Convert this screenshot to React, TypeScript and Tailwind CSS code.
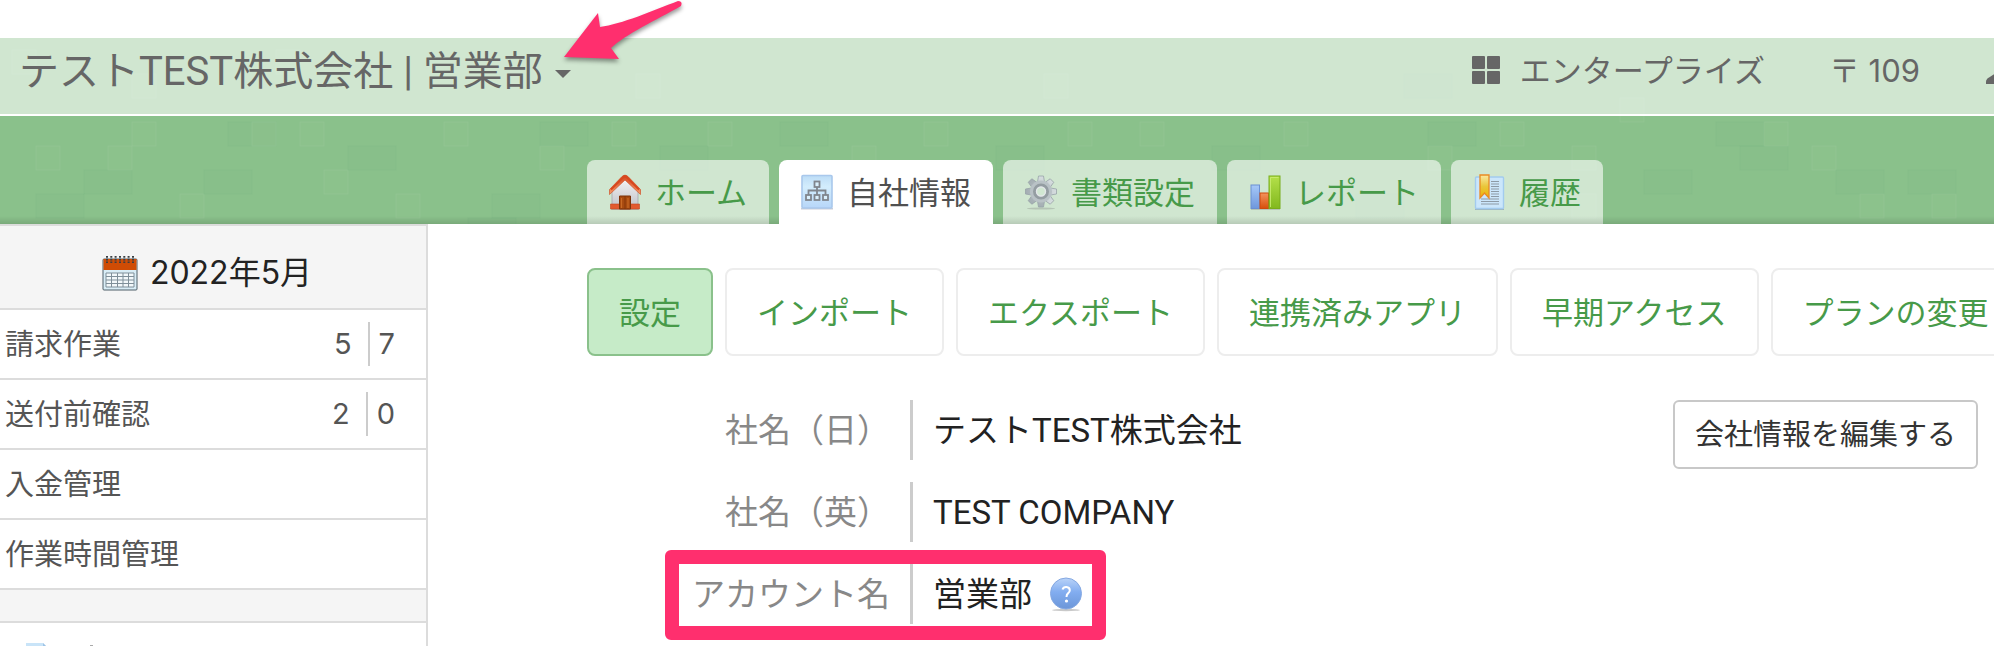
import { useState } from 'react'
import type { ReactNode } from 'react'

// faint tiles scattered over the green header, [column, row, tone]
const TILES: [number, number, number][] = [
  [3, 4, 1], [5, 5, 0], [3, 6, 0], [6, 4, 1], [7, 3, 1], [9, 6, 1], [10, 5, 0], [11, 3, 0], [12, 3, 1], [14, 3, 1], [15, 5, 1], [16, 4, 0],
  [18, 6, 1], [20, 3, 1], [21, 7, 0], [22, 6, 0], [24, 3, 0], [24, 4, 1], [27, 3, 1], [29, 4, 0], [31, 3, 1], [34, 3, 0],
  [37, 4, 1], [40, 3, 1], [43, 4, 0], [46, 3, 1], [49, 3, 1], [52, 4, 0], [55, 3, 1], [58, 6, 0], [61, 3, 0], [61, 4, 1], [64, 3, 1],
  [67, 4, 1], [67, 6, 1], [70, 5, 0], [73, 3, 0], [74, 4, 0], [75, 3, 1], [77, 4, 1], [78, 5, 0], [79, 6, 1], [81, 5, 0], [82, 6, 1],
  [2, 0, 1], [7, 1, 1], [13, 0, 1], [28, 1, 1], [45, 1, 1], [60, 1, 0], [69, 2, 1],
]

function Texture() {
  return (
    <svg className="absolute inset-0 h-full w-full" aria-hidden="true">
      {TILES.map(([col, row, tone]) => (
        <rect
          key={`${col}-${row}`}
          x={col * 24 - 36}
          y={row * 24 + 12}
          width={tone ? 24 : 48}
          height="24"
          fill={tone ? '#a4d09a' : '#76b485'}
          fillOpacity={tone ? 0.1 : 0.09}
          stroke={tone ? '#b4d8ac' : '#6fae7c'}
          strokeOpacity="0.16"
        />
      ))}
    </svg>
  )
}

function HomeIcon() {
  return (
    <svg className="h-9 w-8" viewBox="0 0 32 36" aria-hidden="true">
      <defs>
        <linearGradient id="wall" x1="0" y1="0" x2="0" y2="1">
          <stop offset="0" stopColor="#f4f4f6" />
          <stop offset="1" stopColor="#bfc0c6" />
        </linearGradient>
        <linearGradient id="roof" x1="0" y1="0" x2="0" y2="1">
          <stop offset="0" stopColor="#d2451f" />
          <stop offset="1" stopColor="#f79a68" />
        </linearGradient>
      </defs>
      <path d="M2 35h28v1H2z" fill="#999" opacity=".5" />
      <path d="M3 16 16 4l13 12v19H3z" fill="url(#wall)" stroke="#a5a5ab" strokeWidth=".8" />
      <path d="M1.500 30h29v5h-29z" fill="#e2592f" stroke="#c8441f" strokeWidth=".6" />
      <path d="M10.500 22h11v13h-11z" fill="#a84a10" stroke="#7d3208" />
      <path d="M16 22v13" stroke="#7d3208" strokeWidth=".8" />
      <path d="M12.500 24v10M19 24v10" stroke="#c96a25" strokeWidth="1.200" />
      <path d="M.5 15.500 13 2.500Q16-.4 19 2.500L31.500 15.500v5L16 6 .5 20.500z" fill="url(#roof)" stroke="#d0512a" strokeWidth=".7" />
      <path d="M2 15.500 14 3.500q2-1.800 4 0l12 12" fill="none" stroke="#d8481f" strokeWidth="2" />
    </svg>
  )
}

function OrgIcon() {
  return (
    <svg className="h-9 w-8" viewBox="0 0 32 36" aria-hidden="true">
      <defs>
        <linearGradient id="orgBg" x1="0" y1="0" x2="0" y2="1">
          <stop offset="0" stopColor="#bcdcf6" />
          <stop offset=".35" stopColor="#d3edfd" />
          <stop offset="1" stopColor="#b7d6f8" />
        </linearGradient>
      </defs>
      <path d="M0 34h32v1.500H0z" fill="#b5b8c4" opacity=".7" />
      <rect x="1" y="1.500" width="30" height="32.500" rx="1" fill="url(#orgBg)" stroke="#a9c8ec" strokeWidth="1.600" />
      <g fill="#d9effc" stroke="#80858d" strokeWidth="1.800">
        <path d="M16 12v9M7.500 21v-4.500h17V21" fill="none" />
        <rect x="13.500" y="7.500" width="5" height="5.500" />
        <rect x="5" y="21" width="5" height="5" />
        <rect x="13.500" y="21" width="5" height="5" />
        <rect x="22" y="21" width="5" height="5" />
      </g>
    </svg>
  )
}

function GearIcon() {
  return (
    <svg className="h-9 w-8" viewBox="0 0 32 36" aria-hidden="true">
      <defs>
        <linearGradient id="gear" x1="0" y1="0" x2="0" y2="1">
          <stop offset="0" stopColor="#d6dddf" />
          <stop offset="1" stopColor="#a3adb2" />
        </linearGradient>
      </defs>
      <ellipse cx="16" cy="34.500" rx="14" ry="1" fill="#777" opacity=".3" />
      <g fill="url(#gear)" stroke="#98a3a8" strokeWidth=".8">
        {[0, 45, 90, 135].map((angle) => (
          <path key={angle} d="M13.500 2h5l1 6v19l-1 6h-5l-1-6V8z" transform={`rotate(${angle} 16 17.500)`} />
        ))}
      </g>
      <circle cx="16" cy="17.500" r="11" fill="#b9c2c6" />
      <circle cx="16" cy="17.500" r="6.500" fill="none" stroke="#949da2" strokeWidth="3" />
      <circle cx="16" cy="17.500" r="4.500" fill="#d1e7d2" stroke="#e2e7e8" strokeWidth="1.400" />
    </svg>
  )
}

function ChartIcon() {
  return (
    <svg className="h-9 w-8" viewBox="0 0 32 36" aria-hidden="true">
      <defs>
        <linearGradient id="barBlue" x1="0" y1="0" x2="0" y2="1">
          <stop offset="0" stopColor="#a6c8f8" />
          <stop offset="1" stopColor="#6f97dc" />
        </linearGradient>
        <linearGradient id="barRed" x1="0" y1="0" x2="0" y2="1">
          <stop offset="0" stopColor="#f4935c" />
          <stop offset="1" stopColor="#d64f0c" />
        </linearGradient>
        <linearGradient id="barGreen" x1="0" y1="0" x2="0" y2="1">
          <stop offset="0" stopColor="#b4e04a" />
          <stop offset="1" stopColor="#82b81e" />
        </linearGradient>
      </defs>
      <path d="M2 35h29v1H2z" fill="#777" opacity=".3" />
      <rect x="2" y="11" width="8.500" height="23.500" fill="url(#barBlue)" stroke="#6a90d2" />
      <rect x="11" y="19" width="8.500" height="15.500" fill="url(#barRed)" stroke="#cf4a0c" />
      <rect x="20" y="2" width="11" height="32.500" fill="url(#barGreen)" stroke="#79ad1b" />
      <path d="M21.500 33V3.500h8" fill="none" stroke="#cbee76" strokeWidth=".8" />
    </svg>
  )
}

function HistoryIcon() {
  return (
    <svg className="h-9 w-8" viewBox="0 0 32 36" aria-hidden="true">
      <defs>
        <linearGradient id="ribbon" x1="0" y1="0" x2="0" y2="1">
          <stop offset="0" stopColor="#fbe9a0" />
          <stop offset=".5" stopColor="#e9c63a" />
          <stop offset="1" stopColor="#eeb400" />
        </linearGradient>
      </defs>
      <path d="M2 34.500h29V36H2z" fill="#7d93ad" opacity=".6" />
      <rect x="2.500" y="3" width="28" height="31.500" rx="1" fill="#cbe6fb" stroke="#a3cbee" strokeWidth="1.400" />
      <path d="M18 7.500h8M18 10h8M18 12.500h8M18 15h8M18 17.500h8M18 20h8M18 22.500h8M8 25h18M8 27.500h18M8 30h18" stroke="#8d9aa6" strokeWidth="1.200" />
      <path d="M7 1h9v23l-4.500-5L7 24z" fill="url(#ribbon)" stroke="#ea8a22" strokeWidth="1.300" />
    </svg>
  )
}

function CalendarIcon() {
  return (
    <svg className="h-9 w-9" viewBox="0 0 36 36" aria-hidden="true">
      <rect x="1" y="4" width="34" height="31" rx="1" fill="#d9edf6" stroke="#4f5f68" />
      <path d="M1.500 4h33v11h-33z" fill="#d04c05" />
      <path d="M4 18h28v14H4z" fill="#f2f8fa" stroke="#7f8f99" />
      <path d="M4 21.500h28M4 25h28M4 28.500h28M9.500 18v14M15.500 18v14M21 18v14M26.500 18v14" stroke="#7f8f99" />
      <path d="M5 1v7M9.300 1v7M13.600 1v7M18 1v7M22.300 1v7M26.600 1v7M31 1v7" stroke="#3b3f42" strokeWidth="2" strokeDasharray="1.800 .9" />
    </svg>
  )
}

function HelpIcon() {
  return (
    <svg className="h-9 w-8" viewBox="0 0 32 36" aria-hidden="true">
      <defs>
        <linearGradient id="help" x1="0" y1="0" x2="0" y2="1">
          <stop offset="0" stopColor="#b9d3f8" />
          <stop offset=".45" stopColor="#82adf0" />
          <stop offset="1" stopColor="#6c96d8" />
        </linearGradient>
      </defs>
      <ellipse cx="16" cy="34" rx="14" ry="1.200" fill="#777" opacity=".4" />
      <circle cx="16" cy="17.500" r="15.500" fill="url(#help)" stroke="#86a9e2" />
      <path d="M12.500 13.500q1-2.800 4-2.500 3.300.3 3.300 3.200 0 1.800-1.800 3.200-1.500 1.200-1.500 3.600" fill="none" stroke="#fff" strokeWidth="2" />
      <circle cx="16.500" cy="25" r="1.600" fill="#fff" />
    </svg>
  )
}

const TABS: { label: string; icon: ReactNode }[] = [
  { label: 'ホーム', icon: <HomeIcon /> },
  { label: '自社情報', icon: <OrgIcon /> },
  { label: '書類設定', icon: <GearIcon /> },
  { label: 'レポート', icon: <ChartIcon /> },
  { label: '履歴', icon: <HistoryIcon /> },
]

const SECTIONS = ['設定', 'インポート', 'エクスポート', '連携済みアプリ', '早期アクセス', 'プランの変更']

const TASKS: { label: string; counts?: [number, number] }[] = [
  { label: '請求作業', counts: [5, 7] },
  { label: '送付前確認', counts: [2, 0] },
  { label: '入金管理' },
  { label: '作業時間管理' },
]

const FIELDS = [
  { label: '社名（日）', value: 'テストTEST株式会社' },
  { label: '社名（英）', value: 'TEST COMPANY' },
  { label: 'アカウント名', value: '営業部', marked: true },
]

function Header({ tab, onTab }: { tab: string; onTab: (label: string) => void }) {
  return (
    <header className="relative shrink-0 overflow-hidden bg-[#8ac18b]">
      <Texture />

      {/* Account bar */}
      <div className="relative flex h-[78px] items-start justify-between border-b-2 border-white bg-white/60 pl-[19px] text-[#666]">
        <button type="button" className="flex h-[68px] items-center gap-3 whitespace-nowrap font-[Roboto,'Noto_Sans_CJK_JP',sans-serif] text-[40px] leading-none">
          テストTEST株式会社 | 営業部
          <svg className="mt-1 h-2 w-4" viewBox="0 0 16 8" fill="currentColor" aria-hidden="true">
            <path d="M0 0h16L8 8z" />
          </svg>
        </button>
        <div className="flex h-16 items-center text-[31px] leading-none whitespace-nowrap">
          <a href="#plan" className="flex items-center gap-5">
            <svg className="h-7 w-7" viewBox="0 0 28 28" fill="currentColor" aria-hidden="true">
              <rect width="13" height="13" rx="1" />
              <rect x="15" width="13" height="13" rx="1" />
              <rect y="15" width="13" height="13" rx="1" />
              <rect x="15" y="15" width="13" height="13" rx="1" />
            </svg>
            エンタープライズ
          </a>
          <a href="#post" className="ml-16">〒 109</a>
          <a href="#user" className="-mr-5 ml-[66px]" aria-label="ユーザー">
            <svg className="h-7 w-7" viewBox="0 0 28 28" fill="currentColor" aria-hidden="true">
              <circle cx="14" cy="8" r="6" />
              <path d="M0 28v-2q0-3 3-4.500l6-4h10l6 4q3 1.500 3 4.500v2z" />
            </svg>
          </a>
        </div>
      </div>

      {/* Tabs */}
      <nav className="relative flex gap-[10px] pt-11 pl-[587px] text-[31px] leading-none">
        {TABS.map(({ label, icon }) => (
          <a
            key={label}
            href="#tab"
            onClick={() => onTab(label)}
            className={`flex h-16 shrink-0 items-center gap-[14px] rounded-t-lg px-[22px] ${
              label === tab ? 'relative z-10 bg-white text-[#505050]' : 'bg-white/60 text-[#479a49]'
            }`}
          >
            {icon}
            {label}
          </a>
        ))}
        <div className="pointer-events-none absolute inset-x-0 bottom-0 h-2 bg-linear-to-t from-black/12 to-transparent" />
      </nav>
    </header>
  )
}

function Sidebar() {
  return (
    <aside className="w-[428px] shrink-0 overflow-hidden border-t-2 border-r-2 border-[#dcdcdc] text-[29px] text-[#555]">
      <h2 className="flex h-[84px] items-center justify-center gap-3 border-b-2 border-[#dcdcdc] bg-[#f5f5f5] pt-3 pr-3 text-[32px] leading-none text-[#222]">
        <CalendarIcon />
        2022年5月
      </h2>
      <ul>
        {TASKS.map(({ label, counts }) => (
          <li key={label} className="flex h-[70px] items-center justify-between border-b-2 border-[#dcdcdc] pr-[31px] pl-[5px] leading-none">
            <a href="#task">{label}</a>
            {counts && (
              <span className="flex leading-[44px]">
                <span className="pr-4">{counts[0]}</span>
                <span className="border-l-2 border-[#ccc] pl-[9px]">{counts[1]}</span>
              </span>
            )}
          </li>
        ))}
      </ul>
      <div className="h-[33px] border-b-2 border-[#dcdcdc] bg-[#f5f5f5]" />
      <div className="flex pt-5 pl-[26px]">
        <svg className="h-9 w-24" viewBox="0 0 96 36" aria-hidden="true">
          <path d="M0 0h17l6 6v30H0z" fill="#c9e4f8" />
          <path d="M17 0l6 6h-6z" fill="#9fc4e6" />
          <path d="M64 2h3v12h-3z" fill="#aaa" />
        </svg>
      </div>
    </aside>
  )
}

export default function App() {
  const [tab, setTab] = useState('自社情報')
  const [section, setSection] = useState('設定')

  return (
    <div className="relative flex h-screen flex-col overflow-hidden bg-white pt-[38px] font-[Inter,'Noto_Sans_CJK_JP',sans-serif]">
      <Header tab={tab} onTab={setTab} />

      <div className="flex min-h-0 flex-1">
        <Sidebar />

        <main className="min-w-0 flex-1 overflow-hidden pt-11 pl-[159px]">
          <div className="flex gap-3 text-[31px] leading-none">
            {SECTIONS.map((label) => (
              <button
                key={label}
                type="button"
                onClick={() => setSection(label)}
                className={`h-[88px] shrink-0 rounded-lg border-2 px-[30px] text-[#479a49] ${
                  label === section ? 'border-[#8ac18b] bg-[#c6ebc8]' : 'border-[#ededed] bg-white'
                }`}
              >
                {label}
              </button>
            ))}
          </div>

          <div className="mt-11 flex items-start justify-between pr-4">
            <dl className="flex flex-col items-start gap-[22px] pl-[78px] leading-none">
              {FIELDS.map(({ label, value, marked }) => (
                <div key={label} className="relative flex h-[60px] items-center">
                  <dt className="w-[245px] pr-5 text-right text-[33px] text-[#888]">{label}</dt>
                  <dd className="flex h-full items-center gap-[18px] border-l-3 border-[#ccc] pl-5 font-[Roboto,'Noto_Sans_CJK_JP',sans-serif] text-[33px] text-[#222]">
                    {value}
                    {marked && (
                      <button type="button" aria-label="ヘルプ">
                        <HelpIcon />
                      </button>
                    )}
                  </dd>
                  {marked && (
                    <div className="pointer-events-none absolute -top-[14px] -right-6 -bottom-4 left-0 rounded-md border-14 border-[#ff2f6e]" />
                  )}
                </div>
              ))}
            </dl>
            <button type="button" className="h-[69px] rounded-md border-2 border-[#c8c8c8] px-5 text-[29px] leading-none text-[#333]">
              会社情報を編集する
            </button>
          </div>
        </main>
      </div>

      {/* Pointer to the account switcher */}
      <svg className="pointer-events-none absolute top-0 left-[560px] h-16 w-32 drop-shadow-[0_3px_2px_rgba(0,0,0,0.4)]" viewBox="0 0 128 64" aria-hidden="true">
        <path d="M4 57 38 13l2 14C62 24 92 11 118 1q5 0 3 5C96 20 66 34 51 48l8 11z" fill="#ff2f6e" />
      </svg>
    </div>
  )
}
